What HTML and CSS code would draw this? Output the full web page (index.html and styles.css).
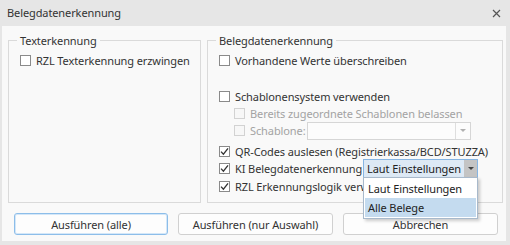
FILE: index.html
```html
<!DOCTYPE html>
<html lang="de">
<head>
  <meta charset="UTF-8">
  <title>Belegdatenerkennung</title>
  <link rel="stylesheet" href="styles.css">
</head>
<body>
  <div class="window">
    <div class="titlebar">
      <span class="title">Belegdatenerkennung</span>
      <svg class="close" width="9" height="9" viewBox="0 0 9 9">
        <path d="M1 1 L8 8 M8 1 L1 8" stroke="#555" stroke-width="1.2" fill="none"/>
      </svg>
    </div>
    <div class="content">
      <div class="groups">
        <fieldset class="group">
          <legend>Texterkennung</legend>
          <label class="check"><span class="box"></span>RZL Texterkennung erzwingen</label>
        </fieldset>
        <fieldset class="group">
          <legend>Belegdatenerkennung</legend>
          <label class="check"><span class="box"></span>Vorhandene Werte überschreiben</label>
          <label class="check row-gap"><span class="box"></span>Schablonensystem verwenden</label>
          <label class="check sub disabled"><span class="box"></span>Bereits zugeordnete Schablonen belassen</label>
          <div class="check sub disabled">
            <span class="box"></span>Schablone:
            <span class="combo combo-off"><span class="combo-btn"><span class="arrow"></span></span></span>
          </div>
          <label class="check checked row-qr"><span class="box"><svg viewBox="0 0 11 11"><path d="M2 5.6 L4.4 8.2 L9 2.4"/></svg></span>QR-Codes auslesen (Registrierkassa/BCD/STUZZA)</label>
          <div class="check checked">
            <span class="box"><svg viewBox="0 0 11 11"><path d="M2 5.6 L4.4 8.2 L9 2.4"/></svg></span>KI Belegdatenerkennung
            <div class="combo combo-on">
              <span class="combo-text">Laut Einstellungen</span>
              <span class="combo-btn"><span class="arrow"></span></span>
              <ul class="popup">
                <li>Laut Einstellungen</li>
                <li class="hover">Alle Belege</li>
              </ul>
            </div>
          </div>
          <label class="check checked row-last"><span class="box"><svg viewBox="0 0 11 11"><path d="M2 5.6 L4.4 8.2 L9 2.4"/></svg></span>RZL Erkennungslogik verwenden</label>
        </fieldset>
      </div>
      <div class="buttons">
        <button class="btn btn-default">Ausführen (alle)</button>
        <button class="btn">Ausführen (nur Auswahl)</button>
        <button class="btn">Abbrechen</button>
      </div>
    </div>
  </div>
</body>
</html>
```

FILE: styles.css
```css
html, body {
  margin: 0;
  padding: 0;
}
body {
  font-family: 'Noto Sans', 'Open Sans', sans-serif;
  font-size: 11px;
  letter-spacing: -0.1px;
  color: #333;
  background: #e6e6e6;
}
.window {
  width: 510px;
  height: 245px;
  box-sizing: border-box;
  background: #e6e6e6;
  padding: 0 4px 4px 2px;
  display: flex;
  flex-direction: column;
}
.titlebar {
  height: 25px;
  display: flex;
  align-items: center;
  justify-content: space-between;
  padding: 0 5px 1px 5px;
}
.close {
  margin-top: 1px;
}
.content {
  flex: 1;
  background: #f9f9f9;
  padding: 7px 3px 0 6px;
}
.groups {
  display: grid;
  grid-template-columns: 193px 296px;
  gap: 6px;
}
.group {
  margin: 0;
  height: 170px;
  box-sizing: border-box;
  border: 1px solid #dadada;
  padding: 4px 8px 0 11px;
  display: flex;
  flex-direction: column;
  min-width: 0;
}
.group legend {
  padding: 0 3px;
  margin-left: -3px;
  line-height: 15px;
}
.check {
  display: flex;
  align-items: center;
  height: 17px;
  white-space: nowrap;
}
.check.sub {
  padding-left: 15px;
}
.row-gap {
  margin-top: 19px;
}
.row-qr {
  margin-top: 4px;
}
.row-last {
  margin-top: 1px;
}
.box {
  width: 11px;
  height: 11px;
  box-sizing: border-box;
  border: 1px solid #8a8a8a;
  background: #fff;
  margin-right: 5px;
  flex: none;
  display: flex;
}
.box svg {
  width: 11px;
  height: 11px;
  margin: -1px;
}
.box path {
  fill: none;
  stroke: #333;
  stroke-width: 1.3;
}
.disabled {
  color: #a3a3a3;
}
.disabled .box {
  border-color: #d2d2d2;
  background: #f7f7f7;
}
.combo {
  position: relative;
  box-sizing: border-box;
  display: flex;
  align-items: center;
  flex: none;
}
.combo-off {
  width: 164px;
  height: 18px;
  margin-left: 1px;
  border: 1px solid #d6d6d6;
  background: #fcfcfc;
  justify-content: flex-end;
}
.combo-off .combo-btn {
  width: 14px;
  height: 100%;
  border-left: 1px solid #dedede;
  display: flex;
  align-items: center;
  justify-content: center;
}
.combo-off .arrow {
  border-top-color: #b0b0b0;
}
.arrow {
  width: 0;
  height: 0;
  border-left: 3px solid transparent;
  border-right: 3px solid transparent;
  border-top: 3px solid #444;
}
.combo-on {
  width: 115px;
  height: 19px;
  margin-left: 1px;
  border: 1px solid #86b5e3;
  background: #dde9f5;
}
.combo-text {
  flex: 1;
  padding-left: 3px;
  color: #222;
}
.combo-on .combo-btn {
  width: 13px;
  height: 100%;
  background: #c4c4c4;
  display: flex;
  align-items: center;
  justify-content: center;
}
.popup {
  position: absolute;
  top: 100%;
  left: -1px;
  width: 115px;
  box-sizing: border-box;
  margin: 0;
  padding: 1px;
  list-style: none;
  background: #fff;
  border: 1px solid #a8b9cb;
  box-shadow: 2px 2px 3px rgba(0,0,0,0.2);
  z-index: 10;
}
.popup li {
  height: 19px;
  line-height: 19px;
  padding-left: 3px;
  color: #222;
}
.popup li.hover {
  background: #c4dbef;
}
.buttons {
  display: flex;
  gap: 10px;
  padding-left: 6px;
  margin-top: 10px;
}
.btn {
  font-family: inherit;
  font-size: 11px;
  letter-spacing: -0.1px;
  color: #333;
  height: 22px;
  width: 155px;
  padding: 0;
  background: #fdfdfd;
  border: 1px solid #d0d0d0;
  border-radius: 3px;
}
.btn-default {
  width: 154px;
  border-color: #8cbde9;
  box-shadow: inset 0 0 0 1px #d4e7f8;
}
```
